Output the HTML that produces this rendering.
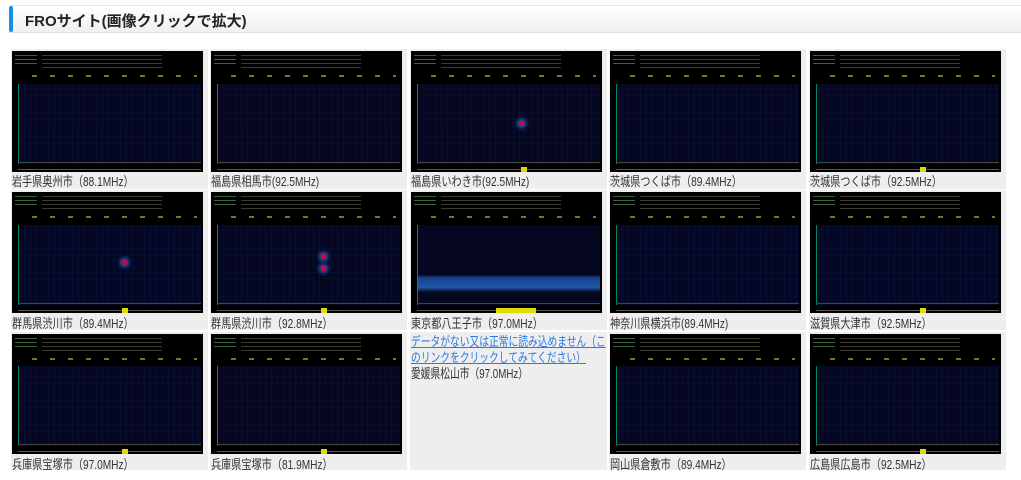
<!DOCTYPE html>
<html><head><meta charset="utf-8"><style>
body{margin:0;width:1021px;height:480px;background:#fff;font-family:"Liberation Sans","Noto Sans CJK JP",sans-serif;overflow:hidden;position:relative}
.hd{position:absolute;left:9px;top:5px;width:1012px;height:28px;background:linear-gradient(#fff,#f0f0f0);border-top:1px solid #e8e8e8;border-bottom:1px solid #e0e0e0;box-sizing:border-box}
.hd:before{content:"";position:absolute;left:0;top:0;width:4px;height:100%;background:#1a8fe8;border-radius:2px}
.hd span{position:absolute;left:16px;top:4px;font-weight:bold;font-size:15px;color:#222}
.c{position:absolute;width:197px;background:#eee}
.im{position:absolute;left:1px;top:2px;width:191px;background:#000;overflow:hidden}
.pl{position:absolute;left:6px;right:2px;top:27%;bottom:7%;background:#04071f;border-left:1px solid #086;background-image:repeating-linear-gradient(90deg,transparent 0,transparent 5px,rgba(30,50,140,.15) 5px,rgba(30,50,140,.15) 6px),repeating-linear-gradient(transparent 0,transparent 5px,rgba(30,50,140,.12) 5px,rgba(30,50,140,.12) 6px)}
.tx{position:absolute;left:30px;top:3px;width:120px;height:14px;background:repeating-linear-gradient(#000 0,#000 1px,#554 1px,#554 2px,#000 2px,#000 4px);opacity:.7}
.tx2{position:absolute;left:3px;top:3px;width:22px;height:12px;background:repeating-linear-gradient(#000 0,#000 1px,#585 1px,#585 2px,#000 2px,#000 4px);opacity:.7}
.tk{position:absolute;left:20px;right:6px;top:20%;height:2px;background:repeating-linear-gradient(90deg,#aa3 0,#aa3 5px,transparent 5px,transparent 18px);opacity:.7}
.bt{position:absolute;left:6px;right:2px;bottom:2px;height:6px;border-top:1px solid #444;border-bottom:1px solid #555}
.yl{position:absolute;bottom:0;width:6px;height:5px;background:#dd0}
.sp{position:absolute;width:5px;height:5px;border-radius:50%;background:#d03;box-shadow:0 0 4px 2px #36c}
.cap{position:absolute;left:1px;font-size:13px;color:#333;white-space:nowrap;transform:scaleX(.78);transform-origin:left}
a{color:#2a7ae2;font-size:13px;line-height:16px}
</style></head><body>
<div class="hd"><span>FROサイト(画像クリックで拡大)</span></div>

<div class="c" style="left:11px;top:49px;height:140px"><div class="im" style="height:121px"><div class="tx2"></div><div class="tx"></div><div class="tk"></div><div class="pl"></div><div class="bt"></div></div><div class="cap" style="top:122px">岩手県奥州市（88.1MHz）</div></div>
<div class="c" style="left:210px;top:49px;height:140px"><div class="im" style="height:121px"><div class="tx2"></div><div class="tx"></div><div class="tk"></div><div class="pl"></div><div class="bt"></div></div><div class="cap" style="top:122px">福島県相馬市(92.5MHz)</div></div>
<div class="c" style="left:410px;top:49px;height:140px"><div class="im" style="height:121px"><div class="tx2"></div><div class="tx"></div><div class="tk"></div><div class="pl"></div><div class="sp" style="left:108px;top:70px"></div><div class="bt"></div><div class="yl" style="left:110px"></div></div><div class="cap" style="top:122px">福島県いわき市(92.5MHz)</div></div>
<div class="c" style="left:609px;top:49px;height:140px"><div class="im" style="height:121px"><div class="tx2"></div><div class="tx"></div><div class="tk"></div><div class="pl"></div><div class="bt"></div></div><div class="cap" style="top:122px">茨城県つくば市（89.4MHz）</div></div>
<div class="c" style="left:809px;top:49px;height:140px"><div class="im" style="height:121px"><div class="tx2"></div><div class="tx"></div><div class="tk"></div><div class="pl"></div><div class="bt"></div><div class="yl" style="left:110px"></div></div><div class="cap" style="top:122px">茨城県つくば市（92.5MHz）</div></div>

<div class="c" style="left:11px;top:190px;height:140px"><div class="im" style="height:121px"><div class="tx2"></div><div class="tx"></div><div class="tk"></div><div class="pl"></div><div class="sp" style="left:110px;top:68px"></div><div class="bt"></div><div class="yl" style="left:110px"></div></div><div class="cap" style="top:123px">群馬県渋川市（89.4MHz）</div></div>
<div class="c" style="left:210px;top:190px;height:140px"><div class="im" style="height:121px"><div class="tx2"></div><div class="tx"></div><div class="tk"></div><div class="pl"></div><div class="sp" style="left:110px;top:62px"></div><div class="sp" style="left:110px;top:74px"></div><div class="bt"></div><div class="yl" style="left:110px"></div></div><div class="cap" style="top:123px">群馬県渋川市（92.8MHz）</div></div>
<div class="c" style="left:410px;top:190px;height:140px"><div class="im" style="height:121px"><div class="tx2"></div><div class="tx"></div><div class="tk"></div><div class="pl" style="background-image:linear-gradient(transparent 0,transparent 62%,#17408a 66%,#1d58a8 78%,transparent 84%)"></div><div class="bt"></div><div class="yl" style="left:85px;width:40px"></div></div><div class="cap" style="top:123px">東京都八王子市（97.0MHz）</div></div>
<div class="c" style="left:609px;top:190px;height:140px"><div class="im" style="height:121px"><div class="tx2"></div><div class="tx"></div><div class="tk"></div><div class="pl"></div><div class="bt"></div></div><div class="cap" style="top:123px">神奈川県横浜市(89.4MHz)</div></div>
<div class="c" style="left:809px;top:190px;height:140px"><div class="im" style="height:121px"><div class="tx2"></div><div class="tx"></div><div class="tk"></div><div class="pl"></div><div class="bt"></div><div class="yl" style="left:110px"></div></div><div class="cap" style="top:123px">滋賀県大津市（92.5MHz）</div></div>

<div class="c" style="left:11px;top:332px;height:138px"><div class="im" style="height:120px"><div class="tx2"></div><div class="tx"></div><div class="tk"></div><div class="pl"></div><div class="bt"></div><div class="yl" style="left:110px"></div></div><div class="cap" style="top:122px">兵庫県宝塚市（97.0MHz）</div></div>
<div class="c" style="left:210px;top:332px;height:138px"><div class="im" style="height:120px"><div class="tx2"></div><div class="tx"></div><div class="tk"></div><div class="pl"></div><div class="bt"></div><div class="yl" style="left:110px"></div></div><div class="cap" style="top:122px">兵庫県宝塚市（81.9MHz）</div></div>
<div class="c" style="left:410px;top:332px;height:138px"><div style="position:absolute;left:1px;top:2px;width:264px;transform:scaleX(.75);transform-origin:left top;line-height:16px"><a href="#">データがない又は正常に読み込めません（こ<br>のリンクをクリックしてみてください）</a><div style="font-size:13px;color:#333">愛媛県松山市（97.0MHz）</div></div></div>
<div class="c" style="left:609px;top:332px;height:138px"><div class="im" style="height:120px"><div class="tx2"></div><div class="tx"></div><div class="tk"></div><div class="pl"></div><div class="bt"></div></div><div class="cap" style="top:122px">岡山県倉敷市（89.4MHz）</div></div>
<div class="c" style="left:809px;top:332px;height:138px"><div class="im" style="height:120px"><div class="tx2"></div><div class="tx"></div><div class="tk"></div><div class="pl"></div><div class="bt"></div><div class="yl" style="left:110px"></div></div><div class="cap" style="top:122px">広島県広島市（92.5MHz）</div></div>
</body></html>
